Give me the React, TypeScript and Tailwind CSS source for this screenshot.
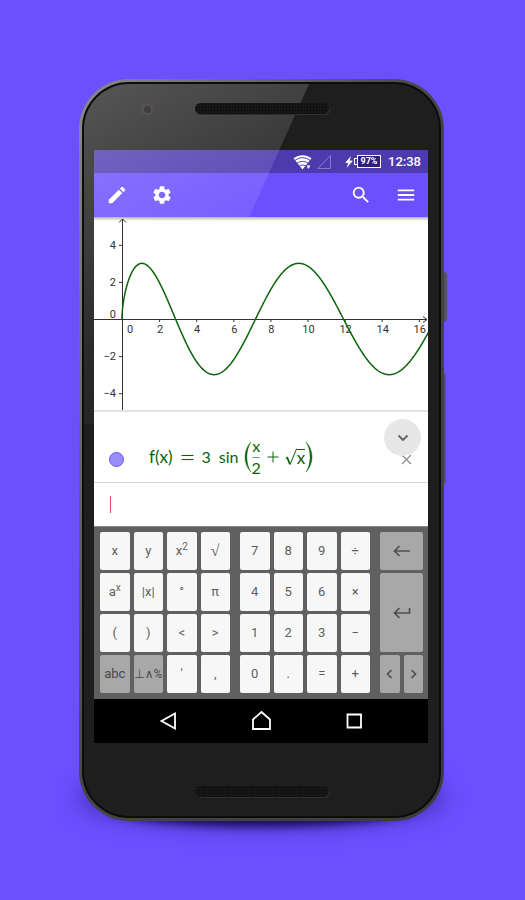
import type { ReactNode } from "react";
import { MdEdit, MdMenu, MdSearch, MdSettings } from "react-icons/md";

const UNIT = 18.55;
const ORIGIN_X = 28;
const ORIGIN_Y = 102;

const f = (x: number) => 3 * Math.sin(x / 2 + Math.sqrt(x));

function curvePath() {
  const points: string[] = [];
  for (let i = 0; i <= 700; i++) {
    // quadratic spacing near zero keeps the steep start of the root smooth
    const x = i < 100 ? (i / 100) ** 2 : 1 + (i - 100) * 0.0275;
    points.push(`${(ORIGIN_X + x * UNIT).toFixed(2)} ${(ORIGIN_Y - f(x) * UNIT).toFixed(2)}`);
  }
  return "M" + points.join("L");
}

function Graph() {
  const xs = [2, 4, 6, 8, 10, 12, 14, 16];
  const ys = [4, 2, -2, -4];
  return (
    <svg
      viewBox="0 0 334 194"
      preserveAspectRatio="xMinYMid slice"
      className="block h-[194px] w-full bg-white font-['Roboto',sans-serif] text-[11px]"
      role="img"
      aria-label="Graph of f"
    >
      <g stroke="#333" strokeWidth="1" fill="none">
        <path d="M0 102.5H333M329 99.5l4 3-4 3" />
        <path d="M28.5 194V2M25 5.5l3.5-3.5 3.5 3.5" />
        {xs.map((x) => (
          <path key={x} d={`M${ORIGIN_X + 0.5 + x * UNIT} 102v3`} />
        ))}
        {ys.map((y) => (
          <path key={y} d={`M25 ${ORIGIN_Y + 0.5 - y * UNIT}h3`} />
        ))}
      </g>
      <g fill="#333" textAnchor="middle">
        <text x="36" y="116">0</text>
        {xs.map((x) => (
          <text key={x} x={ORIGIN_X + 1 + x * UNIT} y="116">{x}</text>
        ))}
      </g>
      <g fill="#333" textAnchor="end">
        <text x="22" y="101">0</text>
        {ys.map((y) => (
          <text key={y} x="22" y={ORIGIN_Y + 4 - y * UNIT}>{y < 0 ? `−${-y}` : y}</text>
        ))}
      </g>
      <path d={curvePath()} fill="none" stroke="#0a640a" strokeWidth="1.5" />
    </svg>
  );
}

function StatusBar() {
  return (
    <div className="flex h-[23px] items-center justify-end bg-[#4e3aaf] pr-[7px] font-['Roboto',sans-serif] text-white">
      <svg width="20" height="16" viewBox="0 0 20 16" aria-label="Wi-Fi">
        <path d="M.5 4.2C6 .2 13 .2 18.500 4.2L9.5 15.500z" fill="#fff" />
        <path d="M2 6.400c5-3.600 10-3.600 15 0M4 9.200c3.600-2.400 7.400-2.400 11 0M6.300 12c2.200-1.300 4.200-1.300 6.400 0" fill="none" stroke="#4e3aaf" strokeWidth="1" />
        <path d="M12.500 11h6v5h-6z" fill="#4e3aaf" />
        <path d="M13.500 11.500h4L15.500 15z" fill="#fff" />
      </svg>
      <svg className="ml-1" width="14" height="14" viewBox="0 0 14 14" aria-label="No signal">
        <path d="M13.500 .5v13H.8z" fill="none" stroke="#8478cb" strokeWidth="1" />
      </svg>
      <svg className="ml-[14px]" width="8" height="12" viewBox="0 0 8 12" aria-label="Charging">
        <path d="M6 0L.2 6.800l3 .4L1.500 12 7.900 4.800l-3.400-.4z" fill="#fff" />
      </svg>
      <div className="ml-px flex items-center">
        <span className="h-[7px] w-[3px] border border-r-0 border-white" />
        <span className="flex h-[13px] w-[24px] items-center justify-center border border-white bg-[#2d1d80] text-[9px] font-bold">97%</span>
      </div>
      <span className="ml-[7px] text-[13px] font-medium">12:38</span>
    </div>
  );
}

function IconButton({ label, children }: { label: string; children: ReactNode }) {
  return (
    <button type="button" aria-label={label} className="flex size-[45px] items-center justify-center text-[22px] text-white">
      {children}
    </button>
  );
}

function Toolbar() {
  return (
    <div className="flex h-[44px] items-center justify-between bg-[#6c4fff]">
      <div className="flex">
        <IconButton label="Edit"><MdEdit /></IconButton>
        <IconButton label="Settings"><MdSettings /></IconButton>
      </div>
      <div className="flex">
        <IconButton label="Search"><MdSearch /></IconButton>
        <IconButton label="Menu"><MdMenu /></IconButton>
      </div>
    </div>
  );
}

function Formula() {
  return (
    <div className="flex items-center font-['Lato',sans-serif] text-[17px] leading-5 text-[#0a640a]">
      <span>f(x)</span>
      <svg className="ml-2" width="13" height="7" viewBox="0 0 13 7" aria-label="equals">
        <path d="M.5 1.500h12M.5 5.500h12" stroke="#0a640a" strokeWidth="1" />
      </svg>
      <span className="ml-2 text-[16px]">3</span>
      <span className="ml-2 text-[16px]">sin</span>
      <svg className="ml-1" width="9" height="32" viewBox="0 0 9 32" aria-hidden="true">
        <path d="M8 1C0 9 0 23 8 31 2.500 23 2.500 9 8 1z" fill="#0a640a" stroke="#0a640a" strokeWidth=".4" />
      </svg>
      <span className="flex flex-col items-center text-[16px]">
        <span className="border-b border-[#6fa36f] pb-px">x</span>
        <span>2</span>
      </span>
      <svg className="ml-[6px]" width="12" height="12" viewBox="0 0 12 12" aria-label="plus">
        <path d="M6 .5v11M.5 6h11" stroke="#0a640a" strokeWidth="1" />
      </svg>
      <svg className="ml-[6px]" width="12" height="18" viewBox="0 0 12 18" aria-label="square root">
        <path d="M.5 10.500l2-1.500L5 16.500 11.500 1H12" fill="none" stroke="#0a640a" strokeWidth="1" />
        <path d="M2 9.500l2.800 6.500" stroke="#0a640a" strokeWidth="1.600" />
      </svg>
      <span className="border-t border-[#0a640a] leading-4">x</span>
      <svg width="9" height="32" viewBox="0 0 9 32" aria-hidden="true">
        <path d="M1 1c8 8 8 22 0 30 5.500-8 5.500-22 0-30z" fill="#0a640a" stroke="#0a640a" strokeWidth=".4" />
      </svg>
    </div>
  );
}

function Algebra() {
  return (
    <div className="relative border-t-2 border-[#e2e2e2] bg-white">
      <div className="flex h-[71px] items-end border-b border-[#d6d6d6] pr-4 pl-[15px]">
        <button type="button" aria-label="Toggle visibility" className="mb-[15px] size-[15px] rounded-full border border-[#6a55f0] bg-[#9a8bff]" />
        <div className="mb-1 ml-[25px] flex-1"><Formula /></div>
        <button type="button" aria-label="Delete" className="mb-[17px] flex w-3 justify-center">
          <svg width="11" height="11" viewBox="0 0 11 11"><path d="M1 1l9 9M10 1l-9 9" stroke="#8a8a8a" strokeWidth="1.200" /></svg>
        </button>
      </div>
      <div className="relative h-[43px]">
        <input aria-label="Input" className="h-full w-full bg-transparent px-4 font-['Lato',sans-serif] text-[16px] outline-none" />
        <span className="absolute top-[13px] left-4 h-[17px] w-px bg-[#f04a4a]" />
      </div>
      <button type="button" aria-label="Collapse" className="absolute top-[7px] right-[7px] flex size-[37px] items-center justify-center rounded-full bg-[#e7e7e7]">
        <svg width="12" height="8" viewBox="0 0 12 8"><path d="M1.500 1.500L6 6l4.500-4.500" fill="none" stroke="#606060" strokeWidth="1.800" /></svg>
      </button>
    </div>
  );
}

function Key({ children, label, dark, className = "" }: { children: ReactNode; label?: string; dark?: boolean; className?: string }) {
  return (
    <button
      type="button"
      aria-label={label}
      className={`flex min-w-0 items-center justify-center rounded-[2px] whitespace-nowrap ${dark ? "bg-[#a8a8a8] text-[#484848]" : "bg-[#f7f7f7] text-[#5e5e5e]"} ${className}`}
    >
      {children}
    </button>
  );
}

const padClass = "grid flex-[130_1_0%] grid-cols-4 grid-rows-[repeat(4,38px)] gap-x-1 gap-y-[3px]";

function Keyboard() {
  const numbers = ["7", "8", "9", "÷", "4", "5", "6", "×", "1", "2", "3", "−", "0", ".", "=", "+"];
  return (
    <div className="flex gap-[10px] border-t border-[#8a8a8a] bg-[#606060] pt-[5px] pr-[5px] pb-[6px] pl-[6px] font-['Roboto','DejaVu_Sans',sans-serif] text-[13px]">
      <div className={padClass}>
        <Key>x</Key>
        <Key>y</Key>
        <Key><span>x<sup className="text-[10px]">2</sup></span></Key>
        <Key className="font-['Liberation_Serif',serif] text-[16px]">√</Key>
        <Key><span>a<sup className="text-[10px]">x</sup></span></Key>
        <Key>|x|</Key>
        <Key>°</Key>
        <Key>π</Key>
        <Key>(</Key>
        <Key>)</Key>
        <Key>&lt;</Key>
        <Key>&gt;</Key>
        <Key dark>abc</Key>
        <Key dark className="text-[12px]">⊥∧%</Key>
        <Key>′</Key>
        <Key>,</Key>
      </div>
      <div className={padClass}>
        {numbers.map((n) => <Key key={n}>{n}</Key>)}
      </div>
      <div className="grid flex-[43_1_0%] grid-cols-2 grid-rows-[repeat(4,38px)] gap-x-1 gap-y-[3px]">
        <Key dark label="Backspace" className="col-span-2">
          <svg width="18" height="12" viewBox="0 0 18 12"><path d="M6.500 1l-5 5 5 5M1.500 6H17" fill="none" stroke="#505050" strokeWidth="1.700" /></svg>
        </Key>
        <Key dark label="Enter" className="col-span-2 row-span-2">
          <svg width="18" height="12" viewBox="0 0 18 12"><path d="M6.500 1l-5 5 5 5M1.500 6H16.500V1" fill="none" stroke="#505050" strokeWidth="1.700" /></svg>
        </Key>
        <Key dark label="Cursor left">
          <svg width="7" height="10" viewBox="0 0 7 10"><path d="M5.500 1l-4 4 4 4" fill="none" stroke="#505050" strokeWidth="1.700" /></svg>
        </Key>
        <Key dark label="Cursor right">
          <svg width="7" height="10" viewBox="0 0 7 10"><path d="M1.500 1l4 4-4 4" fill="none" stroke="#505050" strokeWidth="1.700" /></svg>
        </Key>
      </div>
    </div>
  );
}

function NavBar() {
  const items = [
    { label: "Back", d: "M19 4.500v15L5.500 12z" },
    { label: "Home", d: "M4 20v-9.500L12.500 3l8.500 7.500V20z" },
    { label: "Recent apps", d: "M5.500 5.500h13.500v13H5.500z" },
  ];
  return (
    <div className="flex h-[44px] items-center justify-center gap-[69px] bg-black">
      {items.map((it) => (
        <button key={it.label} type="button" aria-label={it.label}>
          <svg width="24" height="24" viewBox="0 0 24 24"><path d={it.d} fill="none" stroke="#fff" strokeWidth="1.800" /></svg>
        </button>
      ))}
    </div>
  );
}

function Speaker() {
  return (
    <span className="block h-[11px] rounded-full bg-[#161616] bg-[radial-gradient(circle,#050505_1px,transparent_1px)] bg-[length:3px_3px] shadow-[1px_1px_0_#303030]" />
  );
}

export default function App() {
  return (
    <main className="min-h-screen bg-[#6c4fff] pt-[79px] pr-[81px] pb-[79px] pl-[79px]">
      <div className="relative">
        <div className="absolute right-7 -bottom-[5px] left-7 h-9 rounded-[50%] bg-[#150a50] blur-[4px]" />
        <div className="absolute right-0 -bottom-1 left-0 h-14 rounded-[50%] bg-[#1c0e66]/60 blur-[12px]" />
        <div className="absolute top-[193px] -right-[3px] h-[50px] w-[5px] rounded-r-sm bg-[#55535f]" />
        <div className="absolute top-[294px] -right-[2px] h-[111px] w-[4px] rounded-r-sm bg-[#55535f]" />
        <div className="relative rounded-[50px] bg-linear-to-br from-[#8a8a8a] via-[#454545] to-[#3c3c3c] p-[3px]">
          <div className="relative overflow-hidden rounded-[47px] border-2 border-[#0c0c0c] bg-[#1e1e1e] pr-[11px] pl-[10px]">
            <div className="relative z-10 -mr-[11px] -ml-[10px] grid h-[66px] grid-cols-[1fr_134px_1fr] pt-[19px]">
              <span className="ml-4 flex size-3 items-center justify-center justify-self-center rounded-full bg-[#555353]">
                <span className="size-[7px] rounded-full bg-[#3f3b45]" />
              </span>
              <Speaker />
            </div>
            <StatusBar />
            <Toolbar />
            <div className="relative z-10">
              <div className="absolute inset-x-0 top-0 h-1 bg-linear-to-b from-black/30 to-transparent" />
              <Graph />
            </div>
            <div className="relative z-10 -mt-px"><Algebra /></div>
            <Keyboard />
            <NavBar />
            <div className="-mr-[11px] -ml-[10px] grid h-[73px] grid-cols-[1fr_134px_1fr] pt-[43px]">
              <span />
              <Speaker />
            </div>
            <div className="pointer-events-none absolute top-0 left-0 h-[340px] w-[225px] bg-linear-[150deg] from-white/25 via-white/5 via-60% to-transparent [clip-path:polygon(0_0,100%_0,32%_100%,0_100%)]" />
          </div>
        </div>
      </div>
    </main>
  );
}
